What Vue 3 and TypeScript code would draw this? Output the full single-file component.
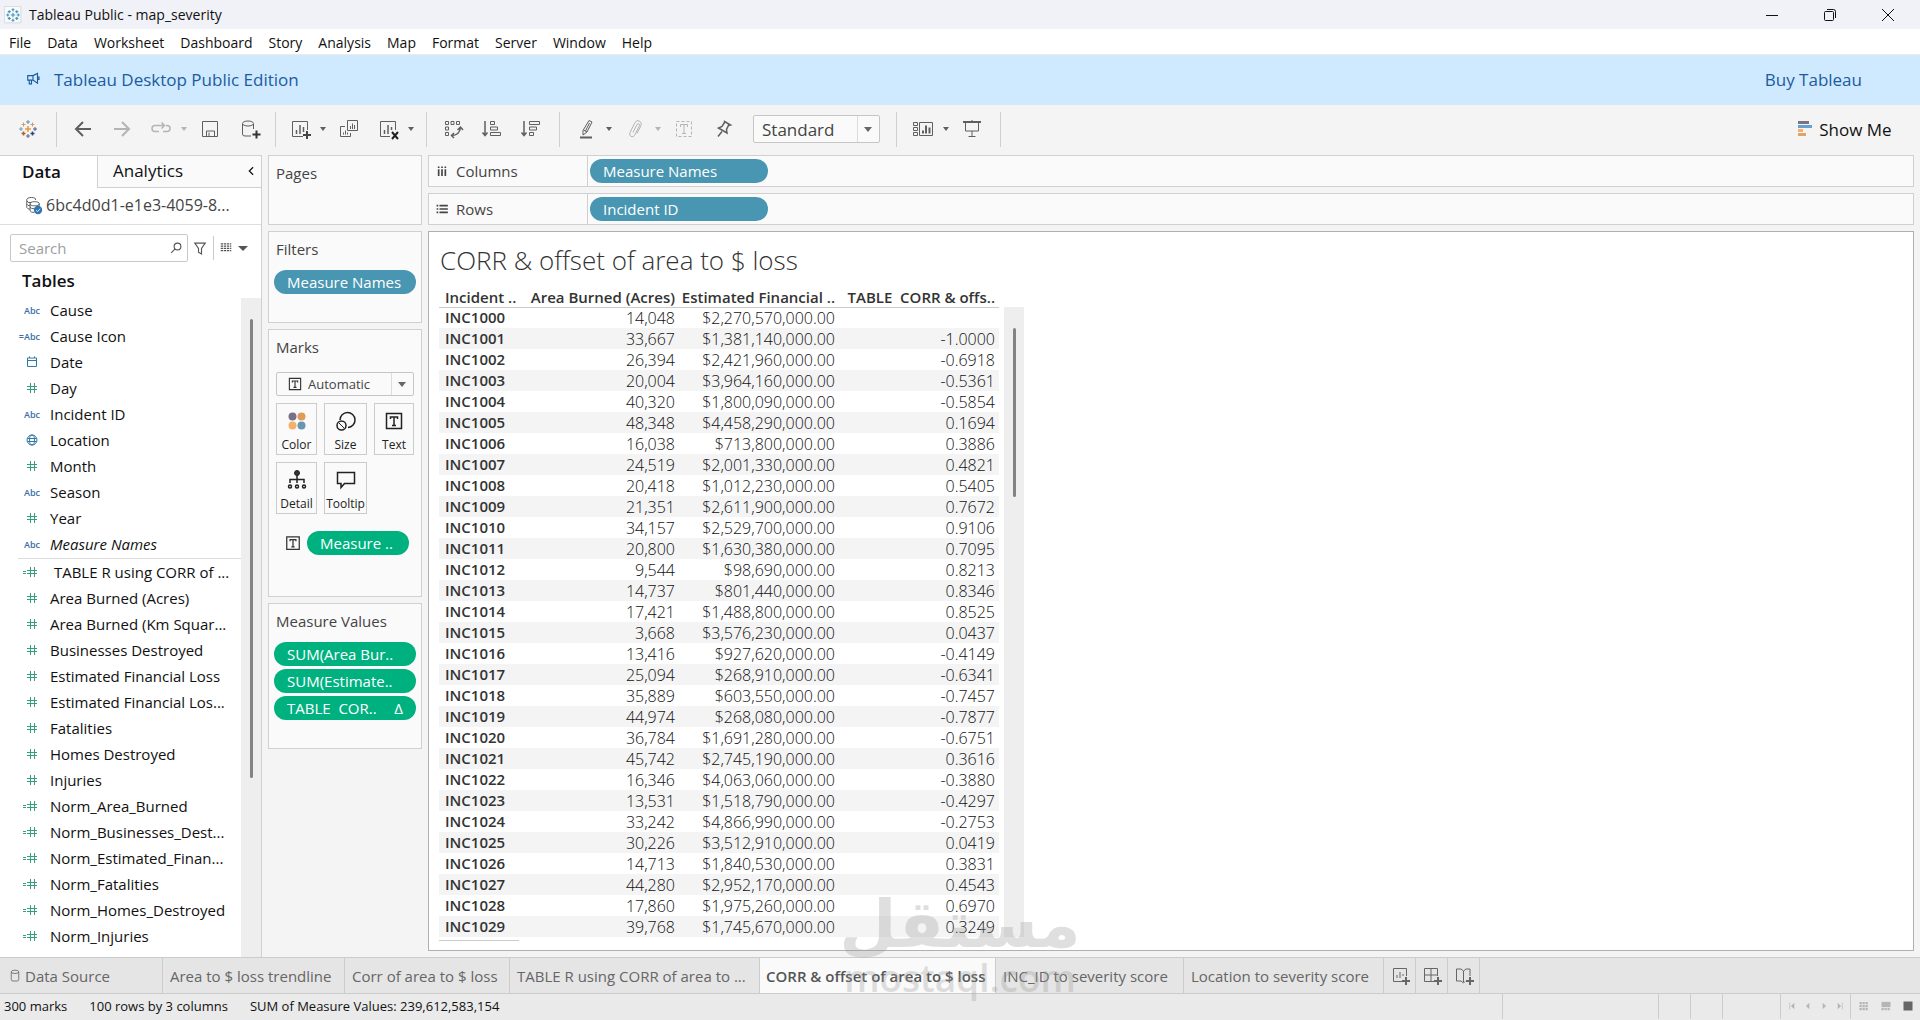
<script setup lang="ts">
import { ref } from 'vue'

interface Tool { icon: string; label: string; caret?: boolean; off?: boolean }
interface Field { kind: string; name: string; calc?: boolean; generated?: boolean }

const icons: Record<string, string> = {
  back: '<path d="M20 12H5M12 5l-7 7 7 7" stroke-width="2"/>',
  forward: '<path d="M4 12h15M12 5l7 7-7 7" stroke-width="2"/>',
  replay: '<path d="M10 14.500H6q-3 0-3-3t3-3h9M12.500 5.500l3 3-3 3M17 8.500h1q3 0 3 3t-3 3h-4" stroke-width="1.500"/>',
  save: '<path d="M4.500 4.500h15v15h-15zM8.500 19v-5h8v5M11 15.500v3.500"/>',
  database: '<path d="M14 19H8q-2.500 0-2.500-2V7M16.500 7v5"/><ellipse cx="11" cy="6.500" rx="5.500" ry="2.500"/><path d="M15.500 17.500h8M19.500 13.500v8" stroke="#333" stroke-width="2"/>',
  sheet: '<path d="M15 19.500H4.500v-15h15V13"/><path d="M8.500 17v-4M12 17V8M15.500 15v-5" stroke-width="1.500"/><path d="M15 18h8M19 14v8" stroke="#444" stroke-width="2"/>',
  duplicate: '<path d="M10.500 3.500h10v10h-10zM8 9.500H3.500v10h10V16M13.500 12v-3M15.500 12V6.500M17.500 12V8M6.500 17.500v-2M8.500 17.500v-4M10.500 17.500v-2"/>',
  clear: '<path d="M14 19.500H4.500v-15h15V13"/><path d="M8.500 17v-4M12 17V8M15.500 13v-3" stroke-width="1.500"/><path d="M16 15l6 7M22 15l-6 7" stroke="#222" stroke-width="2"/>',
  swap: '<path d="M4.500 4.500h3v3h-3zM10 4.500h3v3h-3zM15.500 4.500h3v3h-3zM4.500 10h3v3h-3zM4.500 15.500h3v3h-3z"/><path d="M10.500 18.500q8 0 9-8M13 16l-2.500 2.500L13 21M16.500 13l3-3 2.500 3" stroke-width="1.500"/>',
  ascending: '<path d="M5 4v14M2.500 15.500l2.500 3 2.500-3" stroke-width="1.500"/><path d="M10.500 4.500h4v3h-4zM10.500 10h7v3h-7zM10.500 15.500h10v3h-10z"/>',
  descending: '<path d="M5 4v14M2.500 15.500l2.500 3 2.500-3" stroke-width="1.500"/><path d="M10.500 4.500h10v3h-10zM10.500 10h7v3h-7zM10.500 15.500h4v3h-4z"/>',
  highlight: '<path d="M15 3.500l3 1.500-5 10-4 3v-4.500zM9.500 13l3.500 2M15.500 6l-4 8"/><path d="M6 20.500h12" stroke-width="2"/>',
  clip: '<path d="M10 15.500l4-8q1-1.500 2-.5t0 2.500l-4.500 9q-1.500 2-3.500 1t-1-4l5-10q2-3 4.500-1.500t1.500 4.500l-4 8"/>',
  label: '<path d="M4.500 4.500h15v15h-15z" stroke-dasharray="3 2"/><path d="M8.500 10V7.500h7V10M12 7.500v9M10 16.500h4"/>',
  pin: '<path d="M13.500 4.500l6 3.500-2 .5-2 4 .5 3.500-8.500-5 3.500-1.500 2.500-4zM11 14.500l-4 5" stroke-width="1.500"/>',
  cards: '<path d="M2.500 5.500h4v3h-4zM2.500 10.500h4v3h-4zM2.500 15.500h4v3h-4zM8.500 5.500h13v13h-13z"/><path d="M12 16.500v-3M15 16.500v-8M18.500 16.500v-6" stroke-width="2"/>',
  present: '<path d="M3 5h18" stroke-width="2"/><path d="M5.500 5v9h13V5M12 14v5M8.500 19.500h7M12 3v2"/>',
  newSheet: '<path d="M14 17.500H5.500v-13h13V12M9 14v-3M12 14V8M15 12v-2"/><path d="M14 17h8M18 13v8" stroke-width="2"/>',
  newDashboard: '<path d="M14 17.500H4.500v-13h13V12M4.500 11h13M11 4.500v13"/><path d="M14 17h8M18 13v8" stroke-width="2"/>',
  newStory: '<path d="M13 17.500L11.500 19 9 17H4.500V5H9l2.500 2L14 5h4v7M11.500 7v11"/><path d="M14 17h8M18 13v8" stroke-width="2"/>',
  boxedText: '<path d="M4.500 4.500h15v15h-15z" stroke-width="1.500"/><path d="M8.500 10V8h7v2M12 8v8M10 16.500h4" stroke-width="1.500"/>',
  size: '<path d="M6 11a7.500 7.500 0 1 1 8 7.500" stroke-width="1.500"/><circle cx="7.500" cy="16.500" r="4.500" stroke-width="1.500"/><path d="M5 14l5 5"/>',
  detail: '<circle cx="12" cy="5" r="2.500" fill="#333"/><path d="M12 7v8M5 15v-3.500h14V15" stroke-width="1.500"/><circle cx="5" cy="18.500" r="1.500" stroke-width="1.500"/><circle cx="12" cy="18.500" r="1.500" stroke-width="1.500"/><circle cx="19" cy="18.500" r="1.500" stroke-width="1.500"/>',
  tooltip: '<path d="M3.500 4.500h17v11h-10L7 19.500v-4H3.500z" stroke-width="1.500"/>',
  color: '<g stroke="none"><circle cx="7.500" cy="7.500" r="4" fill="#77728a"/><circle cx="16.500" cy="7.500" r="4" fill="#df9b58"/><circle cx="7.500" cy="16.500" r="4" fill="#f4b16a"/><circle cx="16.500" cy="16.500" r="4" fill="#6796b5"/></g>',
  mark: '<path d="M12 9v6M9 12h6" stroke="#e8963e" stroke-width="1.500"/><path d="M7.500 5.500v4M5.500 7.500h4M16.500 5.500v4M14.500 7.500h4" stroke="#d99a5b"/><path d="M7.500 14.500v4M5.500 16.500h4" stroke="#b0602c" stroke-width="1.500"/><path d="M16.500 14.500v4M14.500 16.500h4" stroke="#27477d" stroke-width="1.500"/><path d="M12 3v4M10 5h4" stroke="#5d90b8"/><path d="M12 17v4M10 19h4" stroke="#5b6591"/><path d="M3 12h4M5 10v4" stroke="#6ba0c8"/><path d="M17 12h4M19 10v4" stroke="#59579a"/>',
  appMark: '<path d="M0.500 0.500h22v22h-22z" stroke="#cfd0d2" fill="#f9fafb"/><path d="M12 9v6M9 12h6M7 5.500v4M5 7.500h4M17 5.500v4M15 7.500h4M7 14.500v4M5 16.500h4M17 14.500v4M15 16.500h4M12 3v4M10 5h4M12 17v4M10 19h4M3 12h4M5 10v4M17 12h4M19 10v4" stroke="#4794bb" stroke-width="1.500"/>',
  horn: '<path d="M5 7.500h7l6-3v13l-6-4H5zM12 7.500v6M7 13.500v5h3v-5M18 9.500h2v3h-2" stroke-width="1.500"/>',
  source: '<path d="M4.500 7v8q1 2 4 2M4.500 11q1 2 4 2M15 6q1-3-5-3T4.500 6.500 10 9M8.500 10.500V19q1 2 5 2M8.500 14.500q1 2 5 2M19.500 13V10.500"/><ellipse cx="14" cy="10.500" rx="5.500" ry="2.500"/><circle cx="18" cy="18" r="5" fill="#2e75b5" stroke="none"/><path d="M15.500 18l2 2 3-3.500" stroke="#fff"/>',
  lens: '<circle cx="14" cy="10" r="4.500" stroke-width="1.500"/><path d="M10.500 13.500l-5 5" stroke-width="1.500"/>',
  funnel: '<path d="M5 5.500h14l-5 7V20l-4-2.500v-5z" stroke-width="1.500"/>',
  rows: '<path d="M5 6.500h14M5 9.500h14M5 12.500h14M5 15.500h14" stroke-width="1.500" stroke-dasharray="3 1"/>',
  columnsShelf: '<path d="M8 6.500v2M12 6.500v2M16 6.500v2M8 10v8M12 10v8M16 10v8" stroke-width="2"/>',
  rowsShelf: '<path d="M5.500 8h2M5.500 12h2M5.500 16h2M9 8h10M9 12h10M9 16h10" stroke-width="2"/>',
  cylinder: '<ellipse cx="12" cy="7" rx="4.500" ry="2"/><path d="M7.500 7v9q0 2 2 2h5q2 0 2-2V7"/>',
  showMe: '<g stroke="none"><path d="M5 4h11v3H5z" fill="#777486"/><path d="M5 8h14v3H5z" fill="#65a0cf"/><path d="M5 12h5v3H5z" fill="#f7ae68"/><path d="M5 16h8v3H5z" fill="#e0a266"/></g>',
  number: '<path d="M10.500 7v10M14.500 7v10M7 10.500h10M7 13.500h10"/>',
  calcNumber: '<path d="M10.500 7v10M14.500 7v10M7 10.500h10M7 13.500h10M3 11.500h3M3 13.500h3"/>',
  date: '<path d="M7.500 8h9v8.500h-9zM7.500 10.500h9M9.500 6.500V8M14.500 6.500V8"/>',
  globe: '<circle cx="12" cy="12" r="5"/><ellipse cx="12" cy="12" rx="2.500" ry="5"/><path d="M7.500 10.500h9M7.500 13.500h9"/>',
  minimise: '<path d="M6 12.500h12"/>',
  restore: '<path d="M6.500 9.500q0-1 1-1h7q1 0 1 1v7q0 1-1 1h-7q-1 0-1-1zM9 6.500h6.500q2 0 2 2V15" />',
  close: '<path d="M6 6l12 12M18 6L6 18" />',
  collapse: '<path d="M14.500 7.500L10 12l4.500 4.500" stroke-width="1.500"/>',
  first: '<path d="M8.500 7v10"/><path d="M15.500 7v10l-5-5z" class="solid"/>',
  previous: '<path d="M14 7v10l-5-5z" class="solid"/>',
  next: '<path d="M10 7v10l5-5z" class="solid"/>',
  last: '<path d="M15.500 7v10"/><path d="M8.500 7v10l5-5z" class="solid"/>',
  grid: '<path d="M6 8h12M6 12h12M6 16h12" stroke-width="3" stroke-dasharray="3 1"/>',
  film: '<path d="M6 10h12" stroke-width="7"/><path d="M6 16h12" stroke-width="3" stroke-dasharray="3 1"/>',
  full: '<path d="M6 12h12" stroke-width="12"/>',
}

const menus = ['File', 'Data', 'Worksheet', 'Dashboard', 'Story', 'Analysis', 'Map', 'Format', 'Server', 'Window', 'Help']

const historyTools: Tool[] = [
  { icon: 'back', label: 'Undo' },
  { icon: 'forward', label: 'Redo', off: true },
  { icon: 'replay', label: 'Replay', caret: true, off: true },
  { icon: 'save', label: 'Save' },
  { icon: 'database', label: 'New data source' },
]
const sheetTools: Tool[] = [
  { icon: 'sheet', label: 'New worksheet', caret: true },
  { icon: 'duplicate', label: 'Duplicate' },
  { icon: 'clear', label: 'Clear sheet', caret: true },
]
const sortTools: Tool[] = [
  { icon: 'swap', label: 'Swap rows and columns' },
  { icon: 'ascending', label: 'Sort ascending' },
  { icon: 'descending', label: 'Sort descending' },
]
const markTools: Tool[] = [
  { icon: 'highlight', label: 'Highlight', caret: true },
  { icon: 'clip', label: 'Group members', caret: true, off: true },
  { icon: 'label', label: 'Show mark labels', off: true },
  { icon: 'pin', label: 'Fix axes' },
]
const viewTools: Tool[] = [
  { icon: 'cards', label: 'Show or hide cards', caret: true },
  { icon: 'present', label: 'Presentation mode' },
]

const dimensions: Field[] = [
  { kind: 'text', name: 'Cause' },
  { kind: 'text', name: 'Cause Icon', calc: true },
  { kind: 'date', name: 'Date' },
  { kind: 'number', name: 'Day' },
  { kind: 'text', name: 'Incident ID' },
  { kind: 'globe', name: 'Location' },
  { kind: 'number', name: 'Month' },
  { kind: 'text', name: 'Season' },
  { kind: 'number', name: 'Year' },
  { kind: 'text', name: 'Measure Names', generated: true },
]
const measures: Field[] = [
  { kind: 'calcNumber', name: '\u00a0TABLE R using CORR of ...' },
  { kind: 'number', name: 'Area Burned (Acres)' },
  { kind: 'number', name: 'Area Burned (Km Squar...' },
  { kind: 'number', name: 'Businesses Destroyed' },
  { kind: 'number', name: 'Estimated Financial Loss' },
  { kind: 'number', name: 'Estimated Financial Los...' },
  { kind: 'number', name: 'Fatalities' },
  { kind: 'number', name: 'Homes Destroyed' },
  { kind: 'number', name: 'Injuries' },
  { kind: 'calcNumber', name: 'Norm_Area_Burned' },
  { kind: 'calcNumber', name: 'Norm_Businesses_Dest...' },
  { kind: 'calcNumber', name: 'Norm_Estimated_Finan...' },
  { kind: 'calcNumber', name: 'Norm_Fatalities' },
  { kind: 'calcNumber', name: 'Norm_Homes_Destroyed' },
  { kind: 'calcNumber', name: 'Norm_Injuries' },
]

const markButtons = [
  { icon: 'color', label: 'Color' },
  { icon: 'size', label: 'Size' },
  { icon: 'boxedText', label: 'Text' },
  { icon: 'detail', label: 'Detail' },
  { icon: 'tooltip', label: 'Tooltip' },
]

const rows: [string, string, string][] = [
  ['14,048', '2,270,570', ''],
  ['33,667', '1,381,140', '-1.0000'],
  ['26,394', '2,421,960', '-0.6918'],
  ['20,004', '3,964,160', '-0.5361'],
  ['40,320', '1,800,090', '-0.5854'],
  ['48,348', '4,458,290', '0.1694'],
  ['16,038', '713,800', '0.3886'],
  ['24,519', '2,001,330', '0.4821'],
  ['20,418', '1,012,230', '0.5405'],
  ['21,351', '2,611,900', '0.7672'],
  ['34,157', '2,529,700', '0.9106'],
  ['20,800', '1,630,380', '0.7095'],
  ['9,544', '98,690', '0.8213'],
  ['14,737', '801,440', '0.8346'],
  ['17,421', '1,488,800', '0.8525'],
  ['3,668', '3,576,230', '0.0437'],
  ['13,416', '927,620', '-0.4149'],
  ['25,094', '268,910', '-0.6341'],
  ['35,889', '603,550', '-0.7457'],
  ['44,974', '268,080', '-0.7877'],
  ['36,784', '1,691,280', '-0.6751'],
  ['45,742', '2,745,190', '0.3616'],
  ['16,346', '4,063,060', '-0.3880'],
  ['13,531', '1,518,790', '-0.4297'],
  ['33,242', '4,866,990', '-0.2753'],
  ['30,226', '3,512,910', '0.0419'],
  ['14,713', '1,840,530', '0.3831'],
  ['44,280', '2,952,170', '0.4543'],
  ['17,860', '1,975,260', '0.6970'],
  ['39,768', '1,745,670', '0.3249'],
]

const sheets = [
  { name: 'Area to $ loss trendline', width: 182 },
  { name: 'Corr of area to $ loss', width: 165 },
  { name: 'TABLE R using CORR of area to ...', width: 250 },
  { name: 'CORR & offset of area to $ loss', width: 236 },
  { name: 'INC_ID to severity score', width: 188 },
  { name: 'Location to severity score', width: 200 },
]
const activeSheet = ref('CORR & offset of area to $ loss')
const search = ref('')
</script>

<template>
  <div class="app">
    <header class="titlebar">
      <svg class="app-icon" viewBox="0 0 24 24" v-html="icons.appMark" />
      <span class="window-title">Tableau Public - map_severity</span>
      <div class="window-buttons">
        <button v-for="b in ['minimise', 'restore', 'close']" :key="b" :aria-label="b">
          <svg class="icon" viewBox="0 0 24 24" v-html="icons[b]" />
        </button>
      </div>
    </header>

    <nav class="menubar">
      <button v-for="m in menus" :key="m">{{ m }}</button>
    </nav>

    <div class="banner">
      <svg class="horn" viewBox="0 0 24 24" v-html="icons.horn" />
      <span>Tableau Desktop Public Edition</span>
      <a href="#">Buy Tableau</a>
    </div>

    <div class="toolbar">
      <div class="tool-group logo-group">
        <button class="tool" aria-label="Start page"><svg class="icon" viewBox="0 0 24 24" v-html="icons.mark" /></button>
      </div>
      <div v-for="(group, i) in [historyTools, sheetTools, sortTools, markTools, viewTools]" :key="i" class="tool-group" :class="'group-' + i">
        <template v-for="t in group" :key="t.icon">
          <button class="tool" :class="{ off: t.off }" :aria-label="t.label">
            <svg class="icon" viewBox="0 0 24 24" v-html="icons[t.icon]" />
          </button>
          <button v-if="t.caret" class="caret" :class="{ off: t.off }" :aria-label="t.label + ' options'" />
        </template>
        <div v-if="i === 3" class="select fit">
          <select aria-label="Fit"><option>Standard</option></select>
        </div>
      </div>
      <button class="show-me">
        <svg class="icon" viewBox="0 0 24 24" v-html="icons.showMe" />Show Me
      </button>
    </div>

    <main class="workspace">
      <aside class="data-pane">
        <div class="pane-tabs">
          <button class="pane-tab current">Data</button>
          <button class="pane-tab">Analytics
            <svg class="icon" viewBox="0 0 24 24" v-html="icons.collapse" />
          </button>
        </div>
        <div class="datasource">
          <svg class="source-icon" viewBox="0 0 24 24" v-html="icons.source" />
          <span>6bc4d0d1-e1e3-4059-8...</span>
        </div>
        <div class="search-row">
          <label class="search">
            <input v-model="search" type="text" placeholder="Search" aria-label="Search" />
            <svg class="icon" viewBox="0 0 24 24" v-html="icons.lens" />
          </label>
          <button class="tool" aria-label="Filter fields"><svg class="icon" viewBox="0 0 24 24" v-html="icons.funnel" /></button>
          <button class="tool view-as" aria-label="View as"><svg class="icon" viewBox="0 0 24 24" v-html="icons.rows" /></button>
          <button class="caret wide" aria-label="More" />
        </div>
        <h2>Tables</h2>
        <div class="fields">
          <div class="field-lists">
            <ul v-for="(list, i) in [dimensions, measures]" :key="i">
              <li v-for="f in list" :key="f.name" :class="{ generated: f.generated }">
                <span v-if="f.kind === 'text'" class="abc">{{ f.calc ? '=Abc' : 'Abc' }}</span>
                <svg v-else class="field-icon" :class="f.kind" viewBox="0 0 24 24" v-html="icons[f.kind]" />
                <span>{{ f.name }}</span>
              </li>
            </ul>
          </div>
          <div class="scroll-track"><div class="scroll-thumb" /></div>
        </div>
      </aside>

      <div class="cards">
        <section class="card pages"><h3>Pages</h3></section>
        <section class="card filters">
          <h3>Filters</h3>
          <button class="pill blue">Measure Names</button>
        </section>
        <section class="card marks">
          <h3>Marks</h3>
          <div class="select mark-type">
            <svg class="icon small" viewBox="0 0 24 24" v-html="icons.boxedText" />
            <select aria-label="Mark type"><option>Automatic</option></select>
          </div>
          <div class="mark-buttons">
            <button v-for="b in markButtons" :key="b.label">
              <svg class="icon" viewBox="0 0 24 24" v-html="icons[b.icon]" />{{ b.label }}
            </button>
          </div>
          <div class="mark-encoding">
            <svg class="icon small" viewBox="0 0 24 24" v-html="icons.boxedText" />
            <button class="pill green">Measure ..</button>
          </div>
        </section>
        <section class="card values">
          <h3>Measure Values</h3>
          <button class="pill green">SUM(Area Bur..</button>
          <button class="pill green">SUM(Estimate..</button>
          <button class="pill green">TABLE&nbsp; COR.. <span class="delta">Δ</span></button>
        </section>
      </div>

      <div class="sheet">
        <div class="shelf">
          <div class="shelf-name"><svg class="icon small" viewBox="0 0 24 24" v-html="icons.columnsShelf" />Columns</div>
          <button class="pill blue">Measure Names</button>
        </div>
        <div class="shelf">
          <div class="shelf-name"><svg class="icon small" viewBox="0 0 24 24" v-html="icons.rowsShelf" />Rows</div>
          <button class="pill blue">Incident ID</button>
        </div>
        <section class="view">
          <h1>CORR &amp; offset of area to $ loss</h1>
          <div class="crosstab">
            <table>
              <thead>
                <tr>
                  <th scope="col">Incident ..</th>
                  <th scope="col">Area Burned (Acres)</th>
                  <th scope="col">Estimated Financial ..</th>
                  <th scope="col">TABLE&nbsp; CORR &amp; offs..</th>
                </tr>
              </thead>
              <tbody>
                <tr v-for="(r, i) in rows" :key="i">
                  <th scope="row">INC{{ 1000 + i }}</th>
                  <td>{{ r[0] }}</td>
                  <td>${{ r[1] }},000.00</td>
                  <td>{{ r[2] }}</td>
                </tr>
              </tbody>
            </table>
            <div class="scroll-track"><div class="scroll-thumb" /></div>
          </div>
          <div class="table-end" />
        </section>
      </div>
    </main>

    <nav class="sheet-tabs">
      <button class="source-tab"><svg class="icon small" viewBox="0 0 24 24" v-html="icons.cylinder" />Data Source</button>
      <button
        v-for="s in sheets"
        :key="s.name"
        :class="{ active: s.name === activeSheet }"
        :style="{ width: s.width + 'px' }"
        @click="activeSheet = s.name"
      >{{ s.name }}</button>
      <button v-for="n in ['newSheet', 'newDashboard', 'newStory']" :key="n" class="new-tab" :aria-label="n">
        <svg class="icon" viewBox="0 0 24 24" v-html="icons[n]" />
      </button>
    </nav>

    <footer class="status">
      <span>300 marks</span>
      <span>100 rows by 3 columns</span>
      <span>SUM of Measure Values: 239,612,583,154</span>
      <div class="cells">
        <i class="cell user" /><i class="cell slot" /><i class="cell slot" /><i class="cell slot last" />
        <div class="cell pager">
          <button v-for="n in ['first', 'previous', 'next', 'last']" :key="n" :aria-label="n + ' sheet'">
            <svg viewBox="0 0 24 24" v-html="icons[n]" />
          </button>
        </div>
        <div class="cell views">
          <button v-for="n in ['grid', 'film', 'full']" :key="n" :class="n" :aria-label="n + ' view'">
            <svg viewBox="0 0 24 24" v-html="icons[n]" />
          </button>
        </div>
      </div>
    </footer>

    <div class="watermark">
      <span class="arabic" lang="ar" dir="rtl">مستقل</span>
      <span class="latin">mostaql.com</span>
    </div>
  </div>
</template>

<style>
body {
  margin: 0;
}
</style>

<style scoped>
.app {
  position: relative;
  display: flex;
  flex-direction: column;
  min-height: 100vh;
  overflow: hidden;
  background: #f4f4f4;
  color: #111;
  font-family: "Open Sans", "Noto Sans", sans-serif;
  font-size: 15px;
}
* {
  box-sizing: border-box;
}
button,
select,
input {
  padding: 0;
  border: 0;
  background: none;
  color: inherit;
  font: inherit;
}
button {
  white-space: pre;
}
h1,
h2,
h3,
ul {
  margin: 0;
  padding: 0;
  list-style: none;
}
svg {
  display: block;
  flex: none;
  fill: none;
  stroke: currentColor;
}
svg :deep(.solid) {
  fill: currentColor;
  stroke: none;
}
.icon {
  width: 24px;
  height: 24px;
}
.icon.small {
  width: 20px;
  height: 20px;
}

.titlebar {
  display: flex;
  align-items: center;
  height: 29px;
  padding: 0 3px 0 4px;
  background: #f1f2f7;
  font-size: 14px;
}
.app-icon {
  width: 18px;
  height: 18px;
  margin-right: 7px;
}
.window-buttons {
  display: flex;
  margin-left: auto;
}
.window-buttons button {
  display: grid;
  place-items: center;
  width: 58px;
}
.menubar {
  display: flex;
  gap: 16px;
  height: 26px;
  padding: 1px 9px 0;
  background: #fff;
  border-bottom: 1px solid #e8ecef;
  font-size: 14px;
}
.banner {
  display: flex;
  align-items: center;
  height: 50px;
  padding: 0 58px 2px 24px;
  background: #cfe9ff;
  color: #1b5c9e;
  font-size: 17px;
}
.horn {
  width: 18px;
  height: 18px;
  margin-right: 12px;
}
.banner a {
  margin-left: auto;
  color: inherit;
  text-decoration: none;
}

.toolbar {
  display: flex;
  align-items: center;
  height: 50px;
  padding-bottom: 2px;
  color: #5f5f5f;
}
.tool-group {
  display: flex;
  align-items: center;
  height: 35px;
  padding: 0 16px 0 14px;
  border-right: 1px solid #d0d0d0;
}
.logo-group {
  padding-left: 16px;
}
.tool {
  width: 24px;
  height: 24px;
  margin-left: 15px;
}
.tool:first-child {
  margin-left: 0;
}
.caret {
  width: 12px;
  height: 24px;
  margin-left: 5px;
  display: grid;
  place-items: center;
}
.caret::before {
  content: "";
  border: 3px solid transparent;
  border-top: 4px solid currentColor;
  border-bottom: 0;
}
.caret.wide {
  margin-left: 0;
}
.caret.wide::before {
  border-width: 5px;
  border-bottom: 0;
}
.caret + .tool {
  margin-left: 8px;
}
.off {
  color: #b4b4b4;
}
.group-0 {
  padding: 0 14px;
}
.group-1 {
  padding: 0 9px 0 12px;
}
.select {
  position: relative;
  display: flex;
  align-items: center;
  border: 1px solid #c6c6c6;
  border-radius: 2px;
  background: #fafafa;
}
.select select {
  flex: 1;
  width: 100%;
  height: 100%;
  appearance: none;
  outline: 0;
}
.select::after {
  content: "";
  position: absolute;
  right: 7px;
  border: 4px solid transparent;
  border-top: 5px solid #666;
  border-bottom: 0;
}
.select::before {
  content: "";
  position: absolute;
  right: 21px;
  width: 1px;
  height: 100%;
  background: #dcdcdc;
}
.fit {
  width: 127px;
  height: 28px;
  margin-left: 18px;
  color: #444;
  font-size: 17px;
}
.fit select {
  padding-left: 8px;
}
.show-me {
  display: flex;
  align-items: center;
  gap: 2px;
  margin-left: auto;
  margin-right: 24px;
  color: #111;
  font-size: 17px;
}

.workspace {
  display: flex;
  flex: 1;
  gap: 6px;
  padding-right: 6px;
}
.data-pane {
  display: flex;
  flex-direction: column;
  flex: none;
  width: 262px;
  background: #fff;
  border: 1px solid #d0d0d0;
  border-width: 1px 1px 0 0;
}
.pane-tabs {
  display: flex;
  height: 32px;
  font-size: 17px;
}
.pane-tab {
  flex: 1;
  display: flex;
  align-items: center;
  justify-content: space-between;
  padding: 0 0 2px 15px;
  background: #fafafa;
  border: 1px solid #d0d0d0;
  border-width: 0 0 1px 1px;
}
.pane-tab.current {
  flex: none;
  width: 97px;
  padding-left: 22px;
  background: #fff;
  border: 0;
  font-weight: 600;
}
.pane-tab .icon {
  width: 20px;
  height: 20px;
}
.datasource {
  display: flex;
  align-items: center;
  gap: 3px;
  height: 37px;
  padding: 0 0 2px 23px;
  border-bottom: 1px solid #dedede;
  color: #444;
  font-size: 16px;
}
.source-icon {
  width: 20px;
  height: 20px;
}
.search-row {
  display: flex;
  align-items: center;
  height: 46px;
  padding: 0 12px 0 10px;
  color: #555;
}
.search {
  display: flex;
  align-items: center;
  flex: 1;
  height: 28px;
  padding: 0 2px 0 8px;
  border: 1px solid #c8c8c8;
  border-radius: 2px;
}
.search input {
  flex: 1;
  width: 0;
  outline: 0;
}
.search input::placeholder {
  color: #9a9f9f;
}
.search-row .tool {
  display: grid;
  place-items: center;
  margin-left: 0;
}
.search-row .icon {
  width: 18px;
  height: 18px;
}
.search-row .view-as {
  margin-left: 1px;
  border-left: 1px solid #ccc;
}
.data-pane h2 {
  height: 27px;
  padding-left: 22px;
  font-size: 17px;
  font-weight: 600;
  line-height: 20px;
}
.fields {
  display: flex;
  flex: 1;
}
.field-lists {
  flex: 1;
  padding-left: 18px;
}
.field-lists ul + ul {
  padding-top: 1px;
  border-top: 1px solid #dcdcdc;
}
.field-lists li {
  display: flex;
  align-items: center;
  height: 26px;
  padding-bottom: 2px;
  white-space: nowrap;
}
.generated {
  font-style: italic;
}
.abc {
  width: 22px;
  margin-right: 10px;
  color: #3a6ea8;
  font-size: 9px;
  font-style: normal;
  font-weight: 600;
  text-align: right;
}
.field-icon {
  width: 24px;
  height: 24px;
  margin: 0 6px 0 2px;
  color: #35a07a;
}
.field-icon.date,
.field-icon.globe {
  color: #2f78a8;
}
.scroll-track {
  width: 20px;
  padding-top: 21px;
  background: #eee;
}
.scroll-thumb {
  width: 3px;
  height: 459px;
  margin: 0 auto;
  border-radius: 2px;
  background: #838383;
}

.cards {
  display: flex;
  flex-direction: column;
  flex: none;
  gap: 6px;
  width: 154px;
}
.card {
  background: #fafafa;
  border: 1px solid #d0d0d0;
  padding: 6px 5px;
}
.card h3 {
  padding-left: 2px;
  color: #444;
  font-size: 15px;
  font-weight: 400;
  line-height: 22px;
}
.pages {
  height: 70px;
}
.filters {
  height: 92px;
}
.marks {
  height: 268px;
}
.values {
  height: 146px;
}
.pill {
  display: flex;
  align-items: center;
  width: 178px;
  height: 24px;
  padding: 0 13px;
  border-radius: 12px;
  color: #fff;
}
.blue {
  background: #4996b2;
}
.green {
  background: #00b180;
}
.card > .pill {
  width: 142px;
}
.filters .pill {
  margin-top: 10px;
}
.values h3 {
  margin-bottom: 10px;
}
.values .pill + .pill {
  margin-top: 3px;
}
.delta {
  margin-left: auto;
}
.mark-type {
  height: 24px;
  margin: 14px 2px 7px;
  padding-left: 9px;
  color: #444;
  font-size: 13px;
}
.mark-type select {
  padding-left: 4px;
}
.mark-type .icon.small {
  width: 18px;
  height: 18px;
}
.mark-type .icon,
.mark-encoding .icon {
  color: #333;
}
.mark-buttons {
  display: grid;
  grid-template-columns: 41px 43px 40px;
  gap: 7px;
  padding-left: 2px;
}
.mark-buttons button {
  display: flex;
  flex-direction: column;
  align-items: center;
  gap: 2px;
  height: 52px;
  padding-top: 5px;
  border: 1px solid #ccc;
  color: #222;
  font-size: 12px;
  line-height: 20px;
}
.mark-encoding {
  display: flex;
  align-items: center;
  gap: 4px;
  margin-top: 17px;
  padding-left: 9px;
}
.mark-encoding .pill {
  width: 102px;
}

.sheet {
  display: flex;
  flex-direction: column;
  flex: 1;
  gap: 6px;
  padding-bottom: 6px;
}
.shelf {
  display: flex;
  align-items: center;
  gap: 2px;
  height: 32px;
  background: #fafafa;
  border: 1px solid #d0d0d0;
}
.shelf-name {
  display: flex;
  align-items: center;
  gap: 4px;
  width: 159px;
  height: 100%;
  padding-left: 3px;
  border-right: 1px solid #d0d0d0;
  color: #444;
}
.view {
  flex: 1;
  padding: 10px 10px 4px;
  background: #fff;
  border: 1px solid #b0b0b0;
}
.view h1 {
  height: 46px;
  padding-left: 1px;
  color: #333;
  font-size: 26px;
  font-weight: 300;
  line-height: 36px;
}
.crosstab {
  display: flex;
}
.crosstab table {
  width: 560px;
  table-layout: fixed;
  border-collapse: collapse;
}
.crosstab th,
.crosstab td {
  height: 21px;
  padding: 0 4px 0 0;
  font-size: 15px;
  line-height: 20px;
  text-align: right;
  white-space: nowrap;
}
.crosstab td {
  color: #111;
  font-size: 16px;
  font-weight: 300;
}
.crosstab th {
  color: #333;
  font-weight: 600;
}
.crosstab tbody th {
  line-height: 18px;
  padding-bottom: 2px;
}
.crosstab thead th {
  height: 19px;
  line-height: 18px;
  border-bottom: 1px solid #ccc;
}
.crosstab th:first-child {
  width: 80px;
  padding-left: 6px;
  padding-right: 0;
  text-align: left;
}
.crosstab tbody tr:nth-child(even) {
  background: #f4f4f4;
}
.crosstab .scroll-track {
  margin: 19px 0 0 5px;
}
.crosstab .scroll-thumb {
  height: 169px;
}
.table-end {
  width: 80px;
  margin-top: 3px;
  border-top: 1px solid #ccc;
}

.sheet-tabs {
  display: flex;
  height: 37px;
  background: #e5e5e5;
  border: 1px solid #ccc;
  border-width: 1px 0;
  color: #666;
}
.sheet-tabs button {
  flex: none;
  padding: 0 0 0 7px;
  border-right: 1px solid #ccc;
  text-align: left;
}
.sheet-tabs .active {
  padding-left: 6px;
  background: #fafafa;
  color: #555;
  font-weight: 600;
}
.sheet-tabs .source-tab {
  display: flex;
  align-items: center;
  width: 163px;
  padding-left: 5px;
}
.sheet-tabs .new-tab {
  display: grid;
  place-items: center;
  width: 32px;
  padding: 0;
}
.status {
  display: flex;
  align-items: center;
  gap: 22px;
  height: 26px;
  padding: 0 2px 2px 4px;
  background: #eaeaea;
  font-size: 13px;
}
.cells {
  display: flex;
  height: 26px;
  margin-left: auto;
}
.cell {
  display: flex;
  align-items: center;
  border-left: 1px solid #ccc;
  color: #b5b5b5;
}
.user {
  width: 156px;
}
.slot {
  width: 32px;
}
.slot.last {
  width: 58px;
}
.pager {
  width: 70px;
  padding-left: 3px;
}
.pager svg {
  width: 16px;
  height: 18px;
}
.views {
  gap: 4px;
  width: 68px;
  padding-left: 4px;
}
.views svg {
  width: 18px;
  height: 22px;
}
.full {
  color: #666;
}

.watermark {
  position: absolute;
  bottom: 22px;
  left: 0;
  right: 0;
  display: flex;
  flex-direction: column;
  align-items: center;
  color: #999;
  opacity: 0.3;
  pointer-events: none;
}
.arabic {
  font: bold 66px/66px "DejaVu Sans", sans-serif;
}
.latin {
  font: 600 37px/40px "Open Sans", sans-serif;
}
</style>
